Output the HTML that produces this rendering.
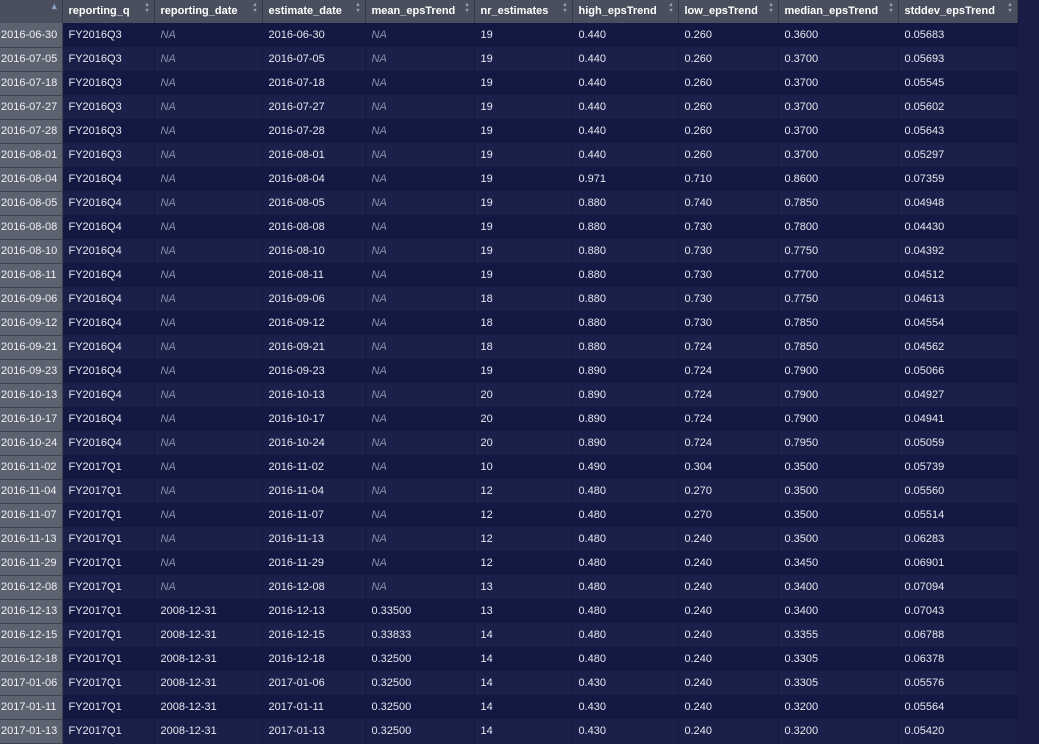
<!DOCTYPE html>
<html><head><meta charset="utf-8"><style>
body{margin:0;background:#191d46;width:1039px;height:744px;overflow:hidden;font-family:"Liberation Sans",sans-serif;font-size:11px;color:#e6e8f0}
table{border-collapse:collapse;table-layout:fixed;width:1017px;position:absolute;left:0;top:0}
th{height:23px;background:#4a4f5d;color:#fff;font-weight:bold;text-align:left;padding:0 0 2px 6px;border-right:1px solid #353a48;position:relative;box-sizing:border-box}
th:after{content:"▴\A▾";white-space:pre;position:absolute;right:5px;top:2px;font-size:6px;line-height:6px;color:#9aa0ad}
th.ix:after{content:"▴";font-size:9px;top:3px;color:#8fa5c8}
td{height:24px;padding:0 0 0 6px;box-sizing:border-box;border-right:1px solid #141838;white-space:nowrap;overflow:hidden}
tr:nth-child(odd) td{background:#131943}
tr:nth-child(even) td{background:#1a2049}
td.ix{background:#5c6270!important;color:#f0f0f0;padding-left:1px;border-bottom:1px solid #3e4350;border-right:1px solid #3e4350}
td.na{color:#8a8fa8;font-style:italic}
</style></head><body>
<table>
<colgroup><col style="width:62px"><col style="width:92px"><col style="width:108px"><col style="width:103px"><col style="width:109px"><col style="width:98px"><col style="width:106px"><col style="width:100px"><col style="width:120px"><col style="width:119px"></colgroup>
<thead><tr><th class="ix"></th><th>reporting_q</th><th>reporting_date</th><th>estimate_date</th><th>mean_epsTrend</th><th>nr_estimates</th><th>high_epsTrend</th><th>low_epsTrend</th><th>median_epsTrend</th><th>stddev_epsTrend</th></tr></thead>
<tbody>
<tr><td class="ix">2016-06-30</td><td>FY2016Q3</td><td class="na">NA</td><td>2016-06-30</td><td class="na">NA</td><td>19</td><td>0.440</td><td>0.260</td><td>0.3600</td><td>0.05683</td></tr>
<tr><td class="ix">2016-07-05</td><td>FY2016Q3</td><td class="na">NA</td><td>2016-07-05</td><td class="na">NA</td><td>19</td><td>0.440</td><td>0.260</td><td>0.3700</td><td>0.05693</td></tr>
<tr><td class="ix">2016-07-18</td><td>FY2016Q3</td><td class="na">NA</td><td>2016-07-18</td><td class="na">NA</td><td>19</td><td>0.440</td><td>0.260</td><td>0.3700</td><td>0.05545</td></tr>
<tr><td class="ix">2016-07-27</td><td>FY2016Q3</td><td class="na">NA</td><td>2016-07-27</td><td class="na">NA</td><td>19</td><td>0.440</td><td>0.260</td><td>0.3700</td><td>0.05602</td></tr>
<tr><td class="ix">2016-07-28</td><td>FY2016Q3</td><td class="na">NA</td><td>2016-07-28</td><td class="na">NA</td><td>19</td><td>0.440</td><td>0.260</td><td>0.3700</td><td>0.05643</td></tr>
<tr><td class="ix">2016-08-01</td><td>FY2016Q3</td><td class="na">NA</td><td>2016-08-01</td><td class="na">NA</td><td>19</td><td>0.440</td><td>0.260</td><td>0.3700</td><td>0.05297</td></tr>
<tr><td class="ix">2016-08-04</td><td>FY2016Q4</td><td class="na">NA</td><td>2016-08-04</td><td class="na">NA</td><td>19</td><td>0.971</td><td>0.710</td><td>0.8600</td><td>0.07359</td></tr>
<tr><td class="ix">2016-08-05</td><td>FY2016Q4</td><td class="na">NA</td><td>2016-08-05</td><td class="na">NA</td><td>19</td><td>0.880</td><td>0.740</td><td>0.7850</td><td>0.04948</td></tr>
<tr><td class="ix">2016-08-08</td><td>FY2016Q4</td><td class="na">NA</td><td>2016-08-08</td><td class="na">NA</td><td>19</td><td>0.880</td><td>0.730</td><td>0.7800</td><td>0.04430</td></tr>
<tr><td class="ix">2016-08-10</td><td>FY2016Q4</td><td class="na">NA</td><td>2016-08-10</td><td class="na">NA</td><td>19</td><td>0.880</td><td>0.730</td><td>0.7750</td><td>0.04392</td></tr>
<tr><td class="ix">2016-08-11</td><td>FY2016Q4</td><td class="na">NA</td><td>2016-08-11</td><td class="na">NA</td><td>19</td><td>0.880</td><td>0.730</td><td>0.7700</td><td>0.04512</td></tr>
<tr><td class="ix">2016-09-06</td><td>FY2016Q4</td><td class="na">NA</td><td>2016-09-06</td><td class="na">NA</td><td>18</td><td>0.880</td><td>0.730</td><td>0.7750</td><td>0.04613</td></tr>
<tr><td class="ix">2016-09-12</td><td>FY2016Q4</td><td class="na">NA</td><td>2016-09-12</td><td class="na">NA</td><td>18</td><td>0.880</td><td>0.730</td><td>0.7850</td><td>0.04554</td></tr>
<tr><td class="ix">2016-09-21</td><td>FY2016Q4</td><td class="na">NA</td><td>2016-09-21</td><td class="na">NA</td><td>18</td><td>0.880</td><td>0.724</td><td>0.7850</td><td>0.04562</td></tr>
<tr><td class="ix">2016-09-23</td><td>FY2016Q4</td><td class="na">NA</td><td>2016-09-23</td><td class="na">NA</td><td>19</td><td>0.890</td><td>0.724</td><td>0.7900</td><td>0.05066</td></tr>
<tr><td class="ix">2016-10-13</td><td>FY2016Q4</td><td class="na">NA</td><td>2016-10-13</td><td class="na">NA</td><td>20</td><td>0.890</td><td>0.724</td><td>0.7900</td><td>0.04927</td></tr>
<tr><td class="ix">2016-10-17</td><td>FY2016Q4</td><td class="na">NA</td><td>2016-10-17</td><td class="na">NA</td><td>20</td><td>0.890</td><td>0.724</td><td>0.7900</td><td>0.04941</td></tr>
<tr><td class="ix">2016-10-24</td><td>FY2016Q4</td><td class="na">NA</td><td>2016-10-24</td><td class="na">NA</td><td>20</td><td>0.890</td><td>0.724</td><td>0.7950</td><td>0.05059</td></tr>
<tr><td class="ix">2016-11-02</td><td>FY2017Q1</td><td class="na">NA</td><td>2016-11-02</td><td class="na">NA</td><td>10</td><td>0.490</td><td>0.304</td><td>0.3500</td><td>0.05739</td></tr>
<tr><td class="ix">2016-11-04</td><td>FY2017Q1</td><td class="na">NA</td><td>2016-11-04</td><td class="na">NA</td><td>12</td><td>0.480</td><td>0.270</td><td>0.3500</td><td>0.05560</td></tr>
<tr><td class="ix">2016-11-07</td><td>FY2017Q1</td><td class="na">NA</td><td>2016-11-07</td><td class="na">NA</td><td>12</td><td>0.480</td><td>0.270</td><td>0.3500</td><td>0.05514</td></tr>
<tr><td class="ix">2016-11-13</td><td>FY2017Q1</td><td class="na">NA</td><td>2016-11-13</td><td class="na">NA</td><td>12</td><td>0.480</td><td>0.240</td><td>0.3500</td><td>0.06283</td></tr>
<tr><td class="ix">2016-11-29</td><td>FY2017Q1</td><td class="na">NA</td><td>2016-11-29</td><td class="na">NA</td><td>12</td><td>0.480</td><td>0.240</td><td>0.3450</td><td>0.06901</td></tr>
<tr><td class="ix">2016-12-08</td><td>FY2017Q1</td><td class="na">NA</td><td>2016-12-08</td><td class="na">NA</td><td>13</td><td>0.480</td><td>0.240</td><td>0.3400</td><td>0.07094</td></tr>
<tr><td class="ix">2016-12-13</td><td>FY2017Q1</td><td>2008-12-31</td><td>2016-12-13</td><td>0.33500</td><td>13</td><td>0.480</td><td>0.240</td><td>0.3400</td><td>0.07043</td></tr>
<tr><td class="ix">2016-12-15</td><td>FY2017Q1</td><td>2008-12-31</td><td>2016-12-15</td><td>0.33833</td><td>14</td><td>0.480</td><td>0.240</td><td>0.3355</td><td>0.06788</td></tr>
<tr><td class="ix">2016-12-18</td><td>FY2017Q1</td><td>2008-12-31</td><td>2016-12-18</td><td>0.32500</td><td>14</td><td>0.480</td><td>0.240</td><td>0.3305</td><td>0.06378</td></tr>
<tr><td class="ix">2017-01-06</td><td>FY2017Q1</td><td>2008-12-31</td><td>2017-01-06</td><td>0.32500</td><td>14</td><td>0.430</td><td>0.240</td><td>0.3305</td><td>0.05576</td></tr>
<tr><td class="ix">2017-01-11</td><td>FY2017Q1</td><td>2008-12-31</td><td>2017-01-11</td><td>0.32500</td><td>14</td><td>0.430</td><td>0.240</td><td>0.3200</td><td>0.05564</td></tr>
<tr><td class="ix">2017-01-13</td><td>FY2017Q1</td><td>2008-12-31</td><td>2017-01-13</td><td>0.32500</td><td>14</td><td>0.430</td><td>0.240</td><td>0.3200</td><td>0.05420</td></tr>
</tbody></table>
</body></html>
